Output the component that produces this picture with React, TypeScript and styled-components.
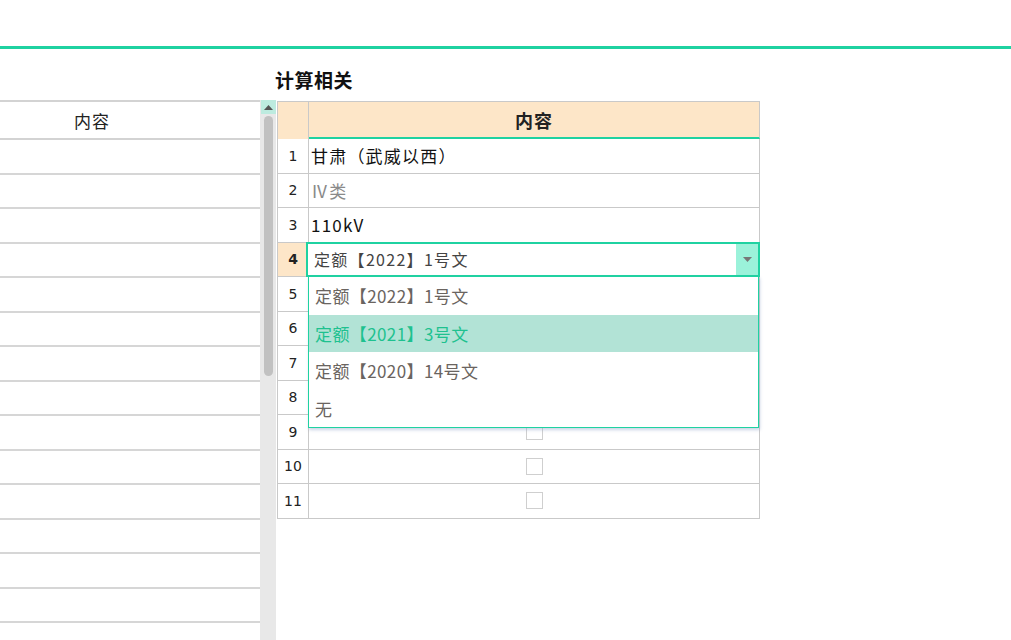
import styled, { createGlobalStyle } from "styled-components";

const GlobalStyle = createGlobalStyle`
  html, body {
    margin: 0;
    padding: 0;
    background: #fff;
    overflow: hidden;
  }
  body {
    font-family: "Noto Sans CJK SC", "Noto Sans", sans-serif;
    color: #222;
  }
`;

const GREEN = "#1fd2a1";
const PEACH = "#fde6c8";
const GRID = "#c9c9c9";

const Page = styled.div`
  width: 1011px;
  height: 640px;
  overflow: hidden;
`;

const TopBar = styled.div`
  height: 46px;
  border-bottom: 3px solid ${GREEN};
`;

const Main = styled.div`
  display: flex;
  align-items: flex-start;
`;

const LeftPanel = styled.div`
  display: flex;
  width: 276px;
  padding-top: 51px;
`;

const LeftTable = styled.div`
  width: 260px;
  border-top: 2px solid #d3d3d3;
`;

const LeftHead = styled.div`
  height: 38px;
  box-sizing: border-box;
  border-bottom: 2px solid #d3d3d3;
  display: flex;
  align-items: center;
`;

const LeftHeadCell = styled.div`
  width: 184px;
  text-align: center;
  font-size: 17px;
  letter-spacing: 1px;
  color: #222;
`;

const LeftRow = styled.div`
  height: 34.5px;
  box-sizing: border-box;
  border-bottom: 2px solid #d6d6d6;
`;

const Scrollbar = styled.div`
  width: 16px;
  height: 540px;
  background: #e8e8e8;
  display: flex;
  flex-direction: column;
  align-items: center;
`;

const ScrollArrow = styled.div`
  width: 15px;
  height: 14px;
  margin-left: 1px;
  background: #bdebdf;
  display: flex;
  align-items: center;
  justify-content: center;
`;

const ScrollThumb = styled.div`
  width: 9px;
  height: 260px;
  margin-top: 2px;
  background: #c1c1c1;
  border-radius: 5px;
`;

const RightPanel = styled.div`
  width: 483px;
  margin-left: 1px;
`;

const Title = styled.div`
  height: 44px;
  padding-top: 8px;
  margin-left: -2px;
  display: flex;
  align-items: center;
  font-size: 19px;
  font-weight: 700;
  color: #111;
  letter-spacing: 0.5px;
`;

const Grid = styled.div`
  position: relative;
  border-top: 1px solid ${GRID};
  border-left: 1px solid ${GRID};
`;

const Row = styled.div<{ $head?: boolean }>`
  display: grid;
  grid-template-columns: 31px 1fr;
  height: ${(p) => (p.$head ? "37px" : "34.5px")};
`;

const NumCell = styled.div<{ $active?: boolean; $head?: boolean }>`
  box-sizing: border-box;
  border-right: 1px solid ${GRID};
  border-bottom: ${(p) => (p.$head ? "none" : `1px solid ${GRID}`)};
  background: ${(p) => (p.$active || p.$head ? PEACH : "#fff")};
  display: flex;
  align-items: center;
  justify-content: center;
  font-family: "DejaVu Sans", sans-serif;
  font-size: 14px;
  font-weight: ${(p) => (p.$active ? 700 : 400)};
  color: #222;
`;

const HeadCell = styled.div`
  box-sizing: border-box;
  border-right: 1px solid ${GRID};
  border-bottom: 2px solid ${GREEN};
  background: ${PEACH};
  display: flex;
  align-items: center;
  justify-content: center;
  font-size: 18px;
  font-weight: 700;
  letter-spacing: 1px;
  color: #222;
`;

const Cell = styled.div<{ $muted?: boolean; $center?: boolean }>`
  position: relative;
  box-sizing: border-box;
  border-right: 1px solid ${GRID};
  border-bottom: 1px solid ${GRID};
  display: flex;
  align-items: center;
  justify-content: ${(p) => (p.$center ? "center" : "flex-start")};
  padding-left: ${(p) => (p.$center ? "0" : "2px")};
  font-size: 17px;
  letter-spacing: 1.2px;
  color: ${(p) => (p.$muted ? "#8a8a8a" : "#111")};
`;

const Check = styled.span`
  width: 17px;
  height: 17px;
  box-sizing: border-box;
  border: 1px solid #cfcfcf;
  background: #fff;
`;

const Editor = styled.div`
  position: absolute;
  left: -3px;
  right: -1px;
  top: -1px;
  bottom: -1px;
  border: 2px solid ${GREEN};
  background: #fff;
  display: flex;
  align-items: center;
  z-index: 2;
`;

const EditorText = styled.div`
  flex: 1;
  padding-left: 6px;
  font-size: 16px;
  letter-spacing: 1.3px;
  color: #444;
`;

const EditorArrow = styled.div`
  width: 22px;
  align-self: stretch;
  background: #9bf2da;
  display: flex;
  align-items: center;
  justify-content: center;
`;

const Dropdown = styled.div`
  position: absolute;
  top: calc(100% + 1px);
  left: 0;
  right: -1px;
  box-sizing: border-box;
  border: 1px solid ${GREEN};
  background: #fff;
  box-shadow: 1px 2px 3px rgba(140, 160, 200, 0.45);
  z-index: 3;
`;

const Option = styled.div<{ $selected?: boolean }>`
  height: 37.5px;
  display: flex;
  align-items: center;
  padding-left: 6px;
  font-size: 17px;
  letter-spacing: 0.4px;
  background: ${(p) => (p.$selected ? "#b2e3d6" : "#fff")};
  color: ${(p) => (p.$selected ? "#1ec18f" : "#6a6460")};
`;

const Triangle = ({ up, color }: { up?: boolean; color: string }) => (
  <svg width="9" height="5" viewBox="0 0 9 5">
    <path d={up ? "M0 5 L4.5 0 L9 5 Z" : "M0 0 L9 0 L4.5 5 Z"} fill={color} />
  </svg>
);

const rows: { text?: string; muted?: boolean }[] = [
  { text: "甘肃（武威以西）" },
  { text: "Ⅳ类", muted: true },
  { text: "110kV" },
];

const options = ["定额【2022】1号文", "定额【2021】3号文", "定额【2020】14号文", "无"];

export default function App() {
  return (
    <Page>
      <GlobalStyle />
      <TopBar />
      <Main>
        <LeftPanel>
          <LeftTable>
            <LeftHead>
              <LeftHeadCell>内容</LeftHeadCell>
            </LeftHead>
            {Array.from({ length: 15 }).map((_, i) => (
              <LeftRow key={i} />
            ))}
          </LeftTable>
          <Scrollbar>
            <ScrollArrow>
              <Triangle up color="#555" />
            </ScrollArrow>
            <ScrollThumb />
          </Scrollbar>
        </LeftPanel>
        <RightPanel>
          <Title>计算相关</Title>
          <Grid>
            <Row $head>
              <NumCell $head />
              <HeadCell>内容</HeadCell>
            </Row>
            {rows.map((r, i) => (
              <Row key={i}>
                <NumCell>{i + 1}</NumCell>
                <Cell $muted={r.muted}>{r.text}</Cell>
              </Row>
            ))}
            <Row>
              <NumCell $active>4</NumCell>
              <Cell>
                <Editor>
                  <EditorText>定额【2022】1号文</EditorText>
                  <EditorArrow>
                    <Triangle color="#777" />
                  </EditorArrow>
                  <Dropdown>
                    {options.map((o, i) => (
                      <Option key={o} $selected={i === 1}>
                        {o}
                      </Option>
                    ))}
                  </Dropdown>
                </Editor>
              </Cell>
            </Row>
            {Array.from({ length: 7 }).map((_, i) => (
              <Row key={i + 5}>
                <NumCell>{i + 5}</NumCell>
                <Cell $center>
                  <Check />
                </Cell>
              </Row>
            ))}
          </Grid>
        </RightPanel>
      </Main>
    </Page>
  );
}
